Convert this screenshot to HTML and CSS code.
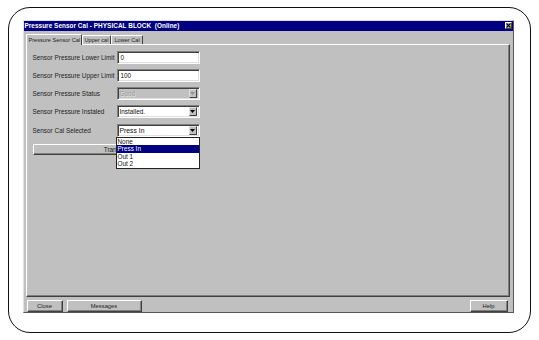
FILE: index.html
```html
<!DOCTYPE html>
<html>
<head>
<meta charset="utf-8">
<link rel="stylesheet" href="styles.css">
</head>
<body>
<div class="frame">
  <div class="window">
    <div class="titlebar">
      <span class="title">Pressure Sensor Cal - PHYSICAL BLOCK&nbsp; (Online)</span>
      <span class="xbtn"><svg width="5" height="5" viewBox="0 0 5 5"><path d="M0.5 0.5 L4.5 4.5 M4.5 0.5 L0.5 4.5" stroke="#000" stroke-width="1.1"/></svg></span>
    </div>
    <div class="body">
      <div class="tabs">
        <div class="tab active">Pressure Sensor Cal</div>
        <div class="tab">Upper cal</div>
        <div class="tab">Lower Cal</div>
      </div>
      <div class="panel">
        <div class="form">
          <div class="label">Sensor Pressure Lower Limit</div>
          <div class="field">0</div>
          <div class="label">Sensor Pressure Upper Limit</div>
          <div class="field">100</div>
          <div class="label">Sensor Pressure Status</div>
          <div class="field select disabled"><span class="val">Good</span><span class="arrow"><svg width="5" height="3" viewBox="0 0 5 3"><path d="M0 0 H5 L2.5 3 Z" fill="#909090"/></svg></span></div>
          <div class="label">Sensor Pressure Instaled</div>
          <div class="field select"><span class="val">Installed.</span><span class="arrow"><svg width="5" height="3" viewBox="0 0 5 3"><path d="M0 0 H5 L2.5 3 Z" fill="#000"/></svg></span></div>
          <div class="label">Sensor Cal Selected</div>
          <div class="field select"><span class="val big">Press In</span><span class="arrow"><svg width="5" height="3" viewBox="0 0 5 3"><path d="M0 0 H5 L2.5 3 Z" fill="#000"/></svg></span></div>
        </div>
        <button class="btn transfer"><span class="tlabel">Transfer</span></button>
        <div class="droplist">
          <div class="opt">None</div>
          <div class="opt sel">Press In</div>
          <div class="opt">Out 1</div>
          <div class="opt">Out 2</div>
        </div>
      </div>
      <div class="footer">
        <button class="btn close">Close</button>
        <button class="btn messages">Messages</button>
        <span class="spacer"></span>
        <button class="btn help">Help</button>
      </div>
    </div>
  </div>
</div>
</body>
</html>
```
FILE: styles.css
```css
* { box-sizing: border-box; }
html, body { margin: 0; padding: 0; }
body {
  width: 539px;
  height: 340px;
  background: #fff;
  font-family: "Liberation Sans", Arial, sans-serif;
  overflow: hidden;
}
.frame {
  margin: 7px 0 0 8px;
  width: 523px;
  height: 326px;
  border: 1.5px solid #111;
  border-radius: 22px;
  padding: 11.5px 0 0 13.5px;
}
.window {
  width: 491px;
  background: #c0c0c0;
  border: 1px solid;
  border-color: #dfdfdf #555 #555 #dfdfdf;
}
.titlebar {
  height: 10px;
  background: #000080;
  color: #fff;
  display: flex;
  align-items: center;
  justify-content: space-between;
  padding: 0 1px 0 1px;
}
.title {
  font-weight: bold;
  font-size: 6.4px;
  white-space: nowrap;
  letter-spacing: 0.05px;
}
.xbtn {
  width: 7px;
  height: 7px;
  background: #c0c0c0;
  border: 1px solid;
  border-color: #fff #404040 #404040 #fff;
  display: flex;
  align-items: center;
  justify-content: center;
}
.xbtn svg { display: block; }
.body {
  padding: 2px 3px 0 2px;
}
.tabs {
  display: flex;
  align-items: flex-end;
  height: 11px;
  margin-left: 1px;
}
.tab {
  font-size: 5.6px;
  color: #222;
  height: 9px;
  line-height: 8px;
  padding: 0 2px;
  border: 1px solid;
  border-bottom: none;
  border-color: #fff #404040 transparent #fff;
  border-radius: 1px 1px 0 0;
  white-space: nowrap;
}
.tab.active {
  height: 11px;
  line-height: 10px;
  padding: 0 1px 0 2px;
  width: 56px;
  margin-left: -1px;
  position: relative;
  z-index: 1;
  margin-bottom: -1px;
  background: #c0c0c0;
}
.panel {
  position: relative;
  height: 253px;
  border: 1px solid;
  border-color: #fff #404040 #404040 #fff;
  box-shadow: inset -1px -1px 0 #808080;
  padding: 6px 0 0 6px;
}
.form {
  display: grid;
  grid-template-columns: 84px 83px;
  grid-auto-rows: 13px;
  row-gap: 5.25px;
  align-items: center;
}
.label {
  font-size: 6.4px;
  color: #222;
  white-space: nowrap;
}
.field {
  height: 13px;
  background: #fff;
  border: 1px solid;
  border-color: #808080 #fff #fff #808080;
  box-shadow: inset 1px 1px 0 #404040, inset -1px -1px 0 #dfdfdf;
  font-size: 6.4px;
  color: #111;
  padding: 0 3px;
  display: flex;
  align-items: center;
}
.field.select {
  padding: 0 2px 0 2px;
  justify-content: space-between;
}
.field.disabled {
  background: #c0c0c0;
  color: #989898;
  text-shadow: 0.5px 0.5px 0 #e8e8e8;
}
.val.big { font-size: 6.8px; }
.arrow {
  width: 8px;
  height: 9px;
  background: #c0c0c0;
  border: 1px solid;
  border-color: #dfdfdf #404040 #404040 #dfdfdf;
  display: flex;
  align-items: center;
  justify-content: center;
}
.arrow svg { display: block; }
.btn {
  display: block;
  font-family: "Liberation Sans", Arial, sans-serif;
  font-size: 5.8px;
  color: #222;
  background: #c0c0c0;
  border: 1px solid;
  border-color: #fff #404040 #404040 #fff;
  box-shadow: inset -1px -1px 0 #808080;
  padding: 0;
  margin: 0;
  height: 11px;
  line-height: 9px;
}
.transfer {
  margin-top: 7px;
  width: 166px;
  font-size: 6.4px;
}
.droplist {
  position: absolute;
  left: 89px;
  top: 92px;
  width: 84px;
  height: 32px;
  background: #fff;
  border: 1px solid #222;
  display: flex;
  flex-direction: column;
  z-index: 2;
}
.opt {
  flex: 1;
  font-size: 6.4px;
  color: #111;
  padding-left: 1px;
  display: flex;
  align-items: center;
}
.opt.sel {
  background: #000080;
  color: #fff;
}
.footer {
  display: flex;
  margin-top: 3px;
  padding-left: 1px;
  padding-right: 2px;
  height: 12px;
  gap: 4px;
}
.footer .btn { height: 12px; line-height: 10px; }
.close { width: 36px; }
.messages { width: 75px; }
.help { width: 38px; }
.spacer { flex: 1; }
```
